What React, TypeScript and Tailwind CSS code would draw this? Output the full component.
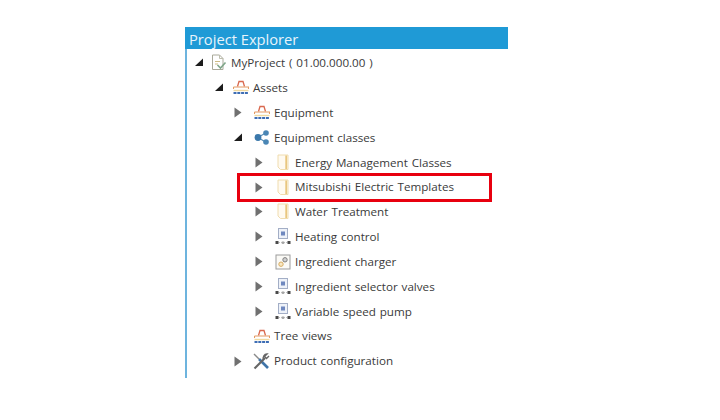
import React from 'react'

type Kind = 'project' | 'asset' | 'classes' | 'folder' | 'module' | 'charger' | 'tools'
type Row = { label: string; depth: number; arrow?: 'open' | 'closed'; icon: Kind }

const rows: Row[] = [
  { label: 'MyProject ( 01.00.000.00 )', depth: 0, arrow: 'open', icon: 'project' },
  { label: 'Assets', depth: 1, arrow: 'open', icon: 'asset' },
  { label: 'Equipment', depth: 2, arrow: 'closed', icon: 'asset' },
  { label: 'Equipment classes', depth: 2, arrow: 'open', icon: 'classes' },
  { label: 'Energy Management Classes', depth: 3, arrow: 'closed', icon: 'folder' },
  { label: 'Mitsubishi Electric Templates', depth: 3, arrow: 'closed', icon: 'folder' },
  { label: 'Water Treatment', depth: 3, arrow: 'closed', icon: 'folder' },
  { label: 'Heating control', depth: 3, arrow: 'closed', icon: 'module' },
  { label: 'Ingredient charger', depth: 3, arrow: 'closed', icon: 'charger' },
  { label: 'Ingredient selector valves', depth: 3, arrow: 'closed', icon: 'module' },
  { label: 'Variable speed pump', depth: 3, arrow: 'closed', icon: 'module' },
  { label: 'Tree views', depth: 2, icon: 'asset' },
  { label: 'Product configuration', depth: 2, arrow: 'closed', icon: 'tools' },
]

function Arrow({ type }: { type?: 'open' | 'closed' }) {
  if (!type) return <span className="w-[9px] shrink-0" />
  return (
    <svg width="9" height="11" viewBox="0 0 9 11" className="shrink-0">
      {type === 'open' ? <path d="M0 9 L8 9 L8 1.5 Z" fill="#1c1c1c" /> : <path d="M0.5 0.5 L7.5 5.5 L0.5 10.5 Z" fill="#707070" />}
    </svg>
  )
}

function TreeIcon({ kind }: { kind: Kind }) {
  if (kind === 'project')
    return (
      <svg width="16" height="17" viewBox="0 0 16 17" fill="none">
        <path d="M1.5 1 H8.5 L12 4.5 V15.5 H1.5 Z" stroke="#a9a99a" fill="#fff" />
        <path d="M8.5 1 V4.5 H12" stroke="#bdbdad" />
        <path d="M4 7.5 H9 M4 10 H7" stroke="#cdbb85" />
        <path d="M6.5 11 L9.5 14 L14.5 8.5" stroke="#7fa68a" strokeWidth="1.6" />
      </svg>
    )
  if (kind === 'asset')
    return (
      <svg width="16" height="15" viewBox="0 0 16 15" fill="none">
        <path d="M4.5 6.5 L6 1.5 H10 L11.5 6.5" stroke="#d9694f" strokeWidth="1.3" />
        <path d="M0.5 7 H15.5 V9" stroke="#e39a63" strokeWidth="1.1" />
        <path d="M0.5 7 V9" stroke="#e39a63" strokeWidth="1.1" />
        <path d="M0.5 10.5 H15.5" stroke="#f0d9a0" strokeWidth="1.4" />
        <path d="M0.5 13 H15.5" stroke="#3d6db5" strokeWidth="2" strokeDasharray="3 0.8" />
      </svg>
    )
  if (kind === 'classes')
    return (
      <svg width="16" height="15" viewBox="0 0 16 15">
        <path d="M4 7.5 L11.5 3 M4 7.5 L11.5 12" stroke="#5a8fb8" strokeWidth="1.2" />
        <circle cx="4" cy="7.5" r="3.4" fill="#3b78ab" />
        <circle cx="12" cy="3" r="2.8" fill="#4a86b5" />
        <circle cx="12" cy="12" r="2.8" fill="#4a86b5" />
      </svg>
    )
  if (kind === 'folder')
    return (
      <svg width="14" height="17" viewBox="0 0 14 17" fill="none">
        <path d="M1 1 H11 V15.5 H3.5 L1 13 Z" fill="#fffaf0" stroke="#f0dcae" />
        <path d="M9.2 1.5 V15" stroke="#e9c67f" strokeWidth="1.8" />
      </svg>
    )
  if (kind === 'module')
    return (
      <svg width="16" height="17" viewBox="0 0 16 17" fill="none">
        <rect x="3.5" y="0.5" width="9" height="10" fill="#eef2f9" stroke="#a3aec6" />
        <rect x="6" y="3.5" width="4" height="4" fill="#6f88bf" />
        <path d="M3.5 14.5 H12.5" stroke="#c4c4c4" strokeDasharray="1.5 1" />
        <rect x="0.5" y="13" width="3" height="3" fill="#4a4a4a" />
        <rect x="6.8" y="13.5" width="2.4" height="2.4" fill="#a6a6a6" />
        <rect x="12.5" y="13" width="3" height="3" fill="#4a4a4a" />
      </svg>
    )
  if (kind === 'charger')
    return (
      <svg width="16" height="16" viewBox="0 0 16 16" fill="none">
        <rect x="1" y="1" width="14" height="14" fill="#fbfaf6" stroke="#9c9c9c" />
        <circle cx="10" cy="5.8" r="2.2" fill="#d0d0d0" stroke="#808080" />
        <circle cx="6" cy="10.2" r="2.2" fill="#f7e7c4" stroke="#d9ad62" />
      </svg>
    )
  return (
    <svg width="17" height="17" viewBox="0 0 17 17" fill="none">
      <path d="M6 6 L15 15" stroke="#3f74a8" strokeWidth="2.6" />
      <path d="M1 1 L6 6" stroke="#8a8a8a" strokeWidth="1.4" />
      <path d="M12 5 L1.5 15.5" stroke="#666" strokeWidth="2.2" />
      <path d="M16 3 L13.5 5.5 L11.5 3.5 L14 1 A4 4 0 0 0 10.5 6.5" stroke="#666" strokeWidth="1.4" />
    </svg>
  )
}

const indents = ['pl-[8px]', 'pl-[28px]', 'pl-[47px]', 'pl-[68px]']
const slots = ['w-[27px]', 'w-[29px]', 'w-[31px]', 'w-[31px]']

export default function App() {
  return (
    <div className="w-[720px] h-[420px] bg-white pt-[27px] pl-[185px] font-['Open_Sans',sans-serif]">
      <div className="relative w-[323px] h-[351px] border-l-2 border-[#6db4de]">
        <div className="h-[22px] -ml-[2px] pl-[4px] bg-[#1f9ad6] text-[#e8f4fb] text-[14.7px] leading-[24px]">Project Explorer</div>
        <div className="pt-[1.5px]">
          {rows.map((r) => (
            <div key={r.label} className={`h-[24.85px] flex items-center ${indents[r.depth]}`}>
              <Arrow type={r.arrow} />
              <span className={`${slots[r.depth]} flex justify-end pr-[4px] shrink-0`}>
                <TreeIcon kind={r.icon} />
              </span>
              <span className="text-[11.65px] text-[#3a3a3a] whitespace-nowrap [word-spacing:0.8px]">{r.label}</span>
            </div>
          ))}
        </div>
        <div className="absolute left-[50px] top-[146px] w-[255px] h-[29px] border-[3px] border-[#e8000f]" />
      </div>
    </div>
  )
}
